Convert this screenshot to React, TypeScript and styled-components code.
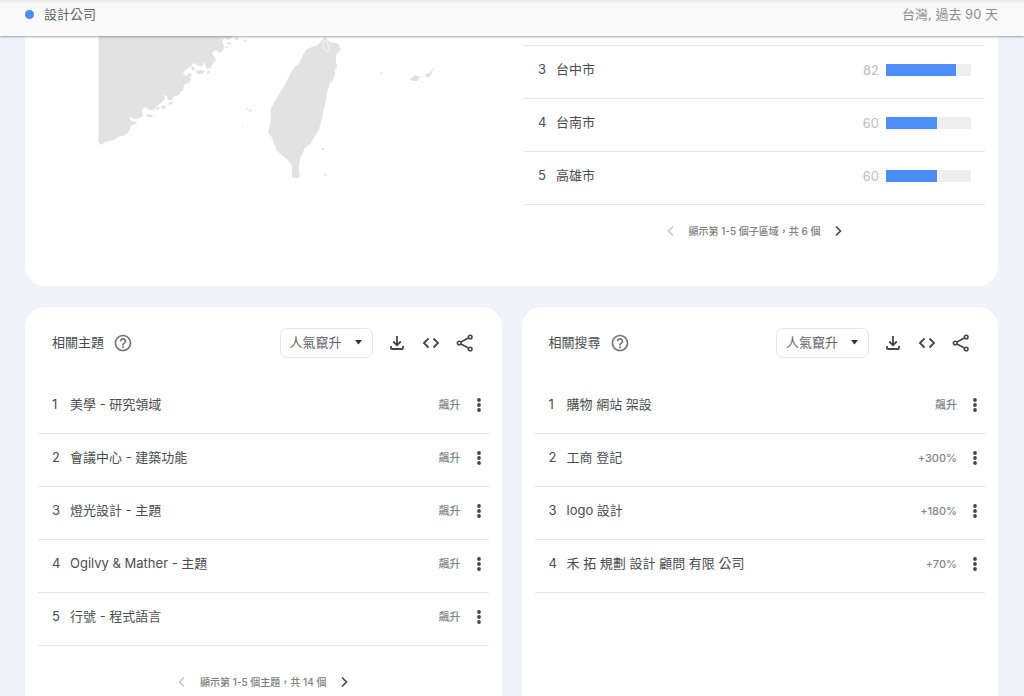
import React from "react";
import styled, { createGlobalStyle } from "styled-components";

const GlobalStyle = createGlobalStyle`
  *, *::before, *::after { box-sizing: border-box; }
  body {
    margin: 0;
    background: #f0f4f9;
    color: #4a4d50;
    font-family: Inter, "Noto Sans CJK TC", sans-serif;
    font-size: 13px;
    line-height: 20px;
  }
  ol { list-style: none; margin: 0; padding: 0; }
  button { border: 0; padding: 0; background: none; color: inherit; font: inherit; cursor: pointer; }
`;

const Page = styled.div`
  display: flex;
  flex-direction: column;
  min-height: 100vh;
`;

const TopBar = styled.header`
  position: sticky;
  top: 0;
  z-index: 1;
  display: flex;
  align-items: flex-start;
  justify-content: space-between;
  height: 36px;
  padding: 4px 26px 0 25px;
  background: linear-gradient(#e8e8e8, #fafafa 4px);
  box-shadow: 0 1px 2px rgba(0, 0, 0, 0.35);
`;

const Term = styled.div`
  display: flex;
  align-items: center;
  gap: 10px;
  color: #5f6368;
`;

const TermDot = styled.span`
  width: 9px;
  height: 9px;
  border-radius: 50%;
  background: #4c8df6;
`;

const Scope = styled.span`
  color: #8d8d8d;
`;

const Main = styled.main`
  flex: 1;
  display: flex;
  flex-direction: column;
  gap: 21px;
  padding: 0 26px 0 25px;
`;

const RegionCard = styled.section`
  display: grid;
  grid-template-columns: 1fr 1fr;
  column-gap: 25px;
  padding: 0 13px 45px;
  border-radius: 0 0 20px 20px;
  background: #fff;
`;

const MapArea = styled.div`
  padding-left: 60px;
`;

const MapDrawing = styled.svg`
  display: block;
  width: 342px;
  height: 150px;
  fill: #e2e2e2;
`;

const RegionColumn = styled.div`
  padding-top: 9px;
`;

const RegionList = styled.ol`
  border-top: 1px solid #e6e6e6;
`;

const Row = styled.li`
  display: flex;
  align-items: center;
  height: 53px;
  padding: 0 0 4px 14px;
  border-bottom: 1px solid #e6e6e6;
`;

const Rank = styled.span`
  width: 18px;
  padding-bottom: 2px;
`;

const Label = styled.span`
  flex: 1;
  padding-bottom: 2px;
`;

const Score = styled.span`
  margin-right: 7px;
  color: #bdbdbd;
`;

const Track = styled.span`
  width: 85px;
  height: 12px;
  margin-right: 14px;
  background: #eee;
`;

const Fill = styled.span`
  display: block;
  height: 100%;
  background: #4c8df6;
`;

const Panels = styled.div`
  flex: 1;
  display: grid;
  grid-template-columns: 1fr 1fr;
  gap: 20px;
`;

const Panel = styled.section`
  padding: 21px 13px 0;
  border-radius: 20px 20px 0 0;
  background: #fff;
`;

const PanelHeader = styled.div`
  display: flex;
  align-items: center;
  height: 30px;
  margin-bottom: 23px;
  padding: 0 14px;
`;

const PanelTitle = styled.h2`
  margin: 0 9px 0 0;
  padding-bottom: 2px;
  font-size: 13px;
  font-weight: 400;
`;

const IconButton = styled.button`
  display: flex;
  align-items: center;
  justify-content: center;
  width: 20px;
  height: 20px;
  color: #444746;
  &:disabled { color: #c8c8c8; cursor: default; }
`;

const Tools = styled.div`
  display: flex;
  align-items: center;
  gap: 14px;
  margin-left: auto;
`;

const SortField = styled.label`
  position: relative;
  display: block;
`;

const SortSelect = styled.select`
  appearance: none;
  display: block;
  width: 93px;
  height: 30px;
  padding: 0 0 2px 9px;
  border: 1px solid #e4e6e8;
  border-radius: 7px;
  background: #fff;
  color: #5f6368;
  font: inherit;
`;

const SortArrow = styled.svg`
  position: absolute;
  top: 12px;
  right: 11px;
  fill: #333;
  pointer-events: none;
`;

const Change = styled.span`
  margin-right: 8px;
  color: #80868b;
  font-size: 11px;
  font-weight: 500;
`;

const Pager = styled.nav<{ $offset?: boolean }>`
  display: flex;
  align-items: center;
  justify-content: center;
  gap: 8px;
  padding-top: ${(p) => (p.$offset ? 26 : 16)}px;
  color: #808080;
  font-size: 10px;
  font-weight: 500;
`;

const HelpIcon = () => (
  <svg width="20" height="20" viewBox="0 0 24 24" fill="#757575">
    <path d="M11 18h2v-2h-2v2zm1-16C6.48 2 2 6.48 2 12s4.48 10 10 10 10-4.48 10-10S17.52 2 12 2zm0 18c-4.41 0-8-3.59-8-8s3.59-8 8-8 8 3.59 8 8-3.59 8-8 8zm0-14c-2.21 0-4 1.79-4 4h2c0-1.1.9-2 2-2s2 .9 2 2c0 2-3 1.75-3 5h2c0-2.25 3-2.5 3-5 0-2.21-1.79-4-4-4z" />
  </svg>
);

const DownloadIcon = () => (
  <svg width="16" height="16" viewBox="0 0 16 16" fill="none" stroke="currentColor" strokeWidth="1.800">
    <path d="M8 1v9M4.200 6.500 8 10.300l3.800-3.800M2 11v2q0 1 1 1h10q1 0 1-1v-2" />
  </svg>
);

const EmbedIcon = () => (
  <svg width="18" height="18" viewBox="0 0 18 18" fill="none" stroke="currentColor" strokeWidth="1.800">
    <path d="M6.500 4.500 2 9l4.500 4.500M11.500 4.500 16 9l-4.500 4.500" />
  </svg>
);

const ShareIcon = () => (
  <svg width="18" height="18" viewBox="0 0 18 18" fill="none" stroke="currentColor" strokeWidth="1.600">
    <circle cx="14.200" cy="3" r="1.800" />
    <circle cx="3.200" cy="9" r="1.800" />
    <circle cx="14.200" cy="15" r="1.800" />
    <path d="M5 8 12.400 4M5 10l7.400 4" />
  </svg>
);

const MoreIcon = () => (
  <svg width="6" height="16" viewBox="0 0 6 16" fill="currentColor">
    <circle cx="3" cy="3" r="1.900" />
    <circle cx="3" cy="8" r="1.900" />
    <circle cx="3" cy="13" r="1.900" />
  </svg>
);

const Chevron = ({ back }: { back?: boolean }) => (
  <svg width="12" height="12" viewBox="0 0 12 12" fill="none" stroke="currentColor" strokeWidth="1.600">
    <path d={back ? "M8 1.500 3.500 6 8 10.500" : "M4 1.500 8.500 6 4 10.500"} />
  </svg>
);

const TaiwanMap = () => (
  <MapDrawing viewBox="98 36 342 150" role="img" aria-label="台灣">
    <path d="M98.500 36H233l-1 2-4 2-4-2-2 4 2 4-1 4-3 3-3-2-2-1-3 3 2 4 2 3-3 3-2 5-4 1-2-4-1-3-2 5-5-2-3-2-4 4-4 2-2 3-1 3 5 1 3 3-1 3-6 3-1 5-5 4-4 2-2 4-4 0-1-4-3-1 1 4-4 4-3 2-4 5-4 0-5-3-3 3 1 6-6 3-6-1-2-2 2 5 6 1-1 2-5 2-3 7-4 3-4 0-6 4-9 2-4 3-2.500-3z" />
    <path d="M235 37l4 1-1 2-4-1zM243 39l4 2-1 1-3-2zM228 42l3 1-1 2-3-2zM225 47l3-1-1 3zM196 71l5-1 4 2-3 2-5 0zM192 66l3 2-1 3-3-2zM187 74l4-1 1 3-4 1zM207 72l2-2 1 2-3 3zM176 93l4-1-1 3-4 1zM170 102l3-1-2 4-3-1zM162 105l4 1-1 3-4-1zM157 107l3 0-1 3-3 0zM146 114l6 1 1 2-5 0zM133 117l5-1-1 2-4 1z" />
    <path d="M246 108l2 0 0 2-2 0zM249 109l4 1-2 2-3-1zM245 113l2 1-1 1zM242 125l1 0 0 2-1 0z" fill="#ececec" />
    <path d="M325 36.700l2 2.300 3.700 3.700 3.300-.2 5 1.500 1 4.300 1.700 1-3.700 2.700-2 3 0 6.700 1 5.300-2 3-.3 5-2 5.700-3.700 4.300-.4 3-1.600 5-1 7-3 13-1 6-3.300 11-3 5-4 6.700-1 2-5.700 4.300-4.300 8.700-1.700 8.300 0 8 1 3-3 2.500-2-.5-2.300.5-.7-4.500-.3-9-3.700-5-6.300-5-5.700-5-.4-3-1.600-3-2.300-7-3.700-4.300 2.700-11.700 0-12 4.300-8 8.300-13.300 8.400-16.700 3.300-4 4-3.300 4-8.700 3.700-6 11.300-4 4-5z" />
    <path d="M324 41l2-1 1.500 1 .5 4 1.500 3-1 3-3 0-2.500-4z" fill="none" stroke="#f6f6f6" />
    <path d="M380 72.500h3v1h-3zM409 79l3-1 2-3 3 1 3 0-1 3-2 2-4 0-2-1zM425 75l3-2 2 0 3-5 1-1-2 5-1 3-3 3-2-1zM421 81l1 0 0 1-1 0zM412 89l1 1-1 0zM322 148l2 0 0 2-2 0zM323 173l3 1 1 2-1 0z" />
  </MapDrawing>
);

type PageSwitchProps = { text: string; offset?: boolean };

const PageSwitch = ({ text, offset }: PageSwitchProps) => (
  <Pager $offset={offset} aria-label={text}>
    <IconButton type="button" disabled aria-label="上一頁"><Chevron back /></IconButton>
    <span>{text}</span>
    <IconButton type="button" aria-label="下一頁"><Chevron /></IconButton>
  </Pager>
);

type Entry = { label: string; change: string };
type TrendPanelProps = { title: string; entries: Entry[]; pager?: string };

const TrendPanel = ({ title, entries, pager }: TrendPanelProps) => (
  <Panel>
    <PanelHeader>
      <PanelTitle>{title}</PanelTitle>
      <IconButton type="button" aria-label="說明"><HelpIcon /></IconButton>
      <Tools>
        <SortField>
          <SortSelect aria-label={`${title}排序`}>
            <option>人氣竄升</option>
          </SortSelect>
          <SortArrow width="7" height="5" viewBox="0 0 7 5"><path d="M0 0h7L3.500 4.500z" /></SortArrow>
        </SortField>
        <IconButton type="button" aria-label="下載"><DownloadIcon /></IconButton>
        <IconButton type="button" aria-label="嵌入"><EmbedIcon /></IconButton>
        <IconButton type="button" aria-label="分享"><ShareIcon /></IconButton>
      </Tools>
    </PanelHeader>
    <ol>
      {entries.map((entry, i) => (
        <Row key={entry.label}>
          <Rank>{i + 1}</Rank>
          <Label>{entry.label}</Label>
          <Change>{entry.change}</Change>
          <IconButton type="button" aria-label="更多"><MoreIcon /></IconButton>
        </Row>
      ))}
    </ol>
    {pager && <PageSwitch text={pager} offset />}
  </Panel>
);

const regions = [
  { rank: 3, name: "台中市", score: 82 },
  { rank: 4, name: "台南市", score: 60 },
  { rank: 5, name: "高雄市", score: 60 },
];

const topics: Entry[] = [
  { label: "美學 - 研究領域", change: "飆升" },
  { label: "會議中心 - 建築功能", change: "飆升" },
  { label: "燈光設計 - 主題", change: "飆升" },
  { label: "Ogilvy & Mather - 主題", change: "飆升" },
  { label: "行號 - 程式語言", change: "飆升" },
];

const queries: Entry[] = [
  { label: "購物 網站 架設", change: "飆升" },
  { label: "工商 登記", change: "+300%" },
  { label: "logo 設計", change: "+180%" },
  { label: "禾 拓 規劃 設計 顧問 有限 公司", change: "+70%" },
];

export default function App() {
  return (
    <Page lang="zh-Hant">
      <GlobalStyle />
      <TopBar>
        <Term><TermDot />設計公司</Term>
        <Scope>台灣, 過去 90 天</Scope>
      </TopBar>
      <Main>
        <RegionCard>
          <MapArea><TaiwanMap /></MapArea>
          <RegionColumn>
            <RegionList>
              {regions.map((region) => (
                <Row key={region.rank}>
                  <Rank>{region.rank}</Rank>
                  <Label>{region.name}</Label>
                  <Score>{region.score}</Score>
                  <Track><Fill style={{ width: `${region.score}%` }} /></Track>
                </Row>
              ))}
            </RegionList>
            <PageSwitch text="顯示第 1-5 個子區域，共 6 個" />
          </RegionColumn>
        </RegionCard>
        <Panels>
          <TrendPanel title="相關主題" entries={topics} pager="顯示第 1-5 個主題，共 14 個" />
          <TrendPanel title="相關搜尋" entries={queries} />
        </Panels>
      </Main>
    </Page>
  );
}
